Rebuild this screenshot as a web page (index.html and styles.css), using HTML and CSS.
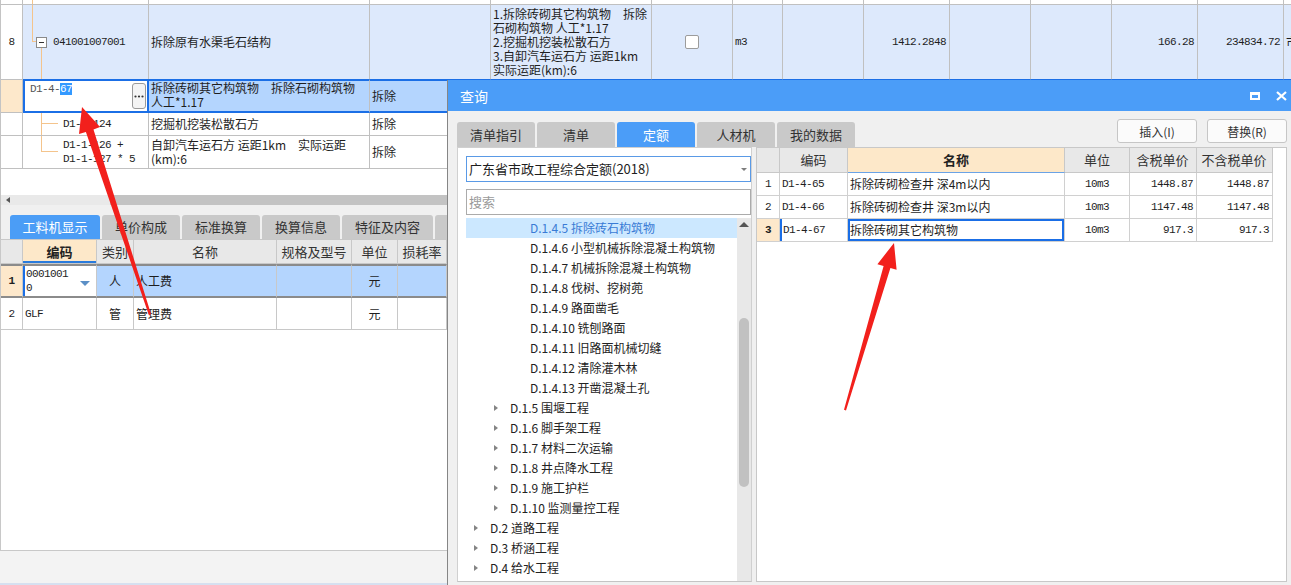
FILE: index.html
```html
<!DOCTYPE html>
<html lang="zh">
<head>
<meta charset="utf-8">
<title>查询</title>
<link rel="stylesheet" href="styles.css">
</head>
<body>
<div class="upper">
  <div class="trow r0">
    <div class="tc w0"></div><div class="tc w1 ln0"></div><div class="tc w2"></div><div class="tc w3"></div><div class="tc w4"></div><div class="tc w5"></div><div class="tc w6"></div><div class="tc w7"></div><div class="tc w8"></div><div class="tc w9"></div><div class="tc w10"></div><div class="tc w11"></div><div class="tc w12"></div><div class="tc w13"></div>
  </div>
  <div class="trow r8">
    <div class="tc w0"><span class="m">8</span></div>
    <div class="tc w1 tree8"><span class="tbox"></span><span class="m">041001007001</span></div>
    <div class="tc w2">拆除原有水渠毛石结构</div>
    <div class="tc w3"></div>
    <div class="tc w4"><div class="lines">1.拆除砖砌其它构筑物　拆除<br>石砌构筑物 人工*1.17<br>2.挖掘机挖装松散石方<br>3.自卸汽车运石方 运距1km<br>实际运距(km):6</div></div>
    <div class="tc w5"><span class="chk"></span></div>
    <div class="tc w6"><span class="m">m3</span></div>
    <div class="tc w7"></div>
    <div class="tc w8 num"><span class="m">1412.2848</span></div>
    <div class="tc w9"></div>
    <div class="tc w10"></div>
    <div class="tc w11 num"><span class="m">166.28</span></div>
    <div class="tc w12 num"><span class="m">234834.72</span></div>
    <div class="tc w13">市政</div>
  </div>
  <div class="trow rsel">
    <div class="tc w0"></div>
    <div class="tc w1 editor"><span class="etext m">D1-4-<span class="hl">67</span></span><span class="ebtn"><svg width="10" height="3" viewBox="0 0 10 3"><circle cx="1.5" cy="1.5" r="1.1" fill="#333"/><circle cx="5" cy="1.5" r="1.1" fill="#333"/><circle cx="8.5" cy="1.5" r="1.1" fill="#333"/></svg></span></div>
    <div class="tc w2 topal"><div class="lines">拆除砖砌其它构筑物　拆除石砌构筑物<br>人工*1.17</div></div>
    <div class="tc w3">拆除</div>
    <div class="tc w4"></div><div class="tc w5"></div><div class="tc w6"></div><div class="tc w7"></div><div class="tc w8"></div><div class="tc w9"></div><div class="tc w10"></div><div class="tc w11"></div><div class="tc w12"></div><div class="tc w13"></div>
  </div>
  <div class="trow rs1">
    <div class="tc w0"></div>
    <div class="tc w1 tree1"><span class="m">D1-1-124</span></div>
    <div class="tc w2">挖掘机挖装松散石方</div>
    <div class="tc w3">拆除</div>
    <div class="tc w4"></div><div class="tc w5"></div><div class="tc w6"></div><div class="tc w7"></div><div class="tc w8"></div><div class="tc w9"></div><div class="tc w10"></div><div class="tc w11"></div><div class="tc w12"></div><div class="tc w13"></div>
  </div>
  <div class="trow rs2">
    <div class="tc w0"></div>
    <div class="tc w1 tree2"><div class="lines m">D1-1-126 +<br>D1-1-127 * 5</div></div>
    <div class="tc w2"><div class="lines">自卸汽车运石方 运距1km　实际运距<br>(km):6</div></div>
    <div class="tc w3">拆除</div>
    <div class="tc w4"></div><div class="tc w5"></div><div class="tc w6"></div><div class="tc w7"></div><div class="tc w8"></div><div class="tc w9"></div><div class="tc w10"></div><div class="tc w11"></div><div class="tc w12"></div><div class="tc w13"></div>
  </div>
</div>
<div class="hscroll"><div class="hs-l"><span class="hs-arrow"></span></div><div class="hs-thumb"></div></div>
<div class="lgap"></div>
<div class="btabs">
  <span class="btab on">工料机显示</span><span class="btab">单价构成</span><span class="btab">标准换算</span><span class="btab">换算信息</span><span class="btab wide">特征及内容</span><span class="btab part"></span>
</div>
<div class="btable">
  <div class="brow bh">
    <div class="bc b0"></div><div class="bc b1 hsel">编码</div><div class="bc b2">类别</div><div class="bc b3">名称</div><div class="bc b4">规格及型号</div><div class="bc b5">单位</div><div class="bc b6">损耗率</div>
  </div>
  <div class="brow bsel">
    <div class="bc b0 rn"><span class="m">1</span></div>
    <div class="bc b1 bed"><div class="lines m">0001001<br>0</div><span class="dd"></span></div>
    <div class="bc b2 cen">人</div>
    <div class="bc b3">人工费</div>
    <div class="bc b4"></div>
    <div class="bc b5 cen">元</div>
    <div class="bc b6"></div>
  </div>
  <div class="brow br2">
    <div class="bc b0 cen"><span class="m">2</span></div>
    <div class="bc b1"><span class="m">GLF</span></div>
    <div class="bc b2 cen">管</div>
    <div class="bc b3">管理费</div>
    <div class="bc b4"></div>
    <div class="bc b5 cen">元</div>
    <div class="bc b6"></div>
  </div>
</div>
<div class="status"></div>
<div class="bline"></div>

<div class="dialog">
  <div class="dtitle">
    <span class="dt-text">查询</span>
    <span class="dt-icons">
      <svg width="10" height="8" viewBox="0 0 10 8"><rect x="0" y="0" width="10" height="3" fill="#fff"/><rect x="1" y="1" width="8" height="6" fill="none" stroke="#fff" stroke-width="2"/></svg>
      <svg width="11" height="10" viewBox="0 0 11 10"><path d="M1 1L10 9M10 1L1 9" stroke="#fff" stroke-width="2.2" fill="none"/></svg>
    </span>
  </div>
  <div class="dbody">
    <div class="dtop">
      <div class="dtabs"><span class="dtab">清单指引</span><span class="dtab">清单</span><span class="dtab on">定额</span><span class="dtab">人材机</span><span class="dtab">我的数据</span></div>
      <div class="dbtns"><button class="dbtn">插入(I)</button><button class="dbtn">替换(R)</button></div>
    </div>
    <div class="dpanes">
      <div class="lpane">
        <div class="combo"><span>广东省市政工程综合定额(2018)</span><span class="caret"></span></div>
        <div class="search">搜索</div>
        <div class="tree">
          <div class="tlist">
            <div class="ti l3 act"><span class="tarr none"></span>D.1.4.5 拆除砖石构筑物</div>
            <div class="ti l3"><span class="tarr none"></span>D.1.4.6 小型机械拆除混凝土构筑物</div>
            <div class="ti l3"><span class="tarr none"></span>D.1.4.7 机械拆除混凝土构筑物</div>
            <div class="ti l3"><span class="tarr none"></span>D.1.4.8 伐树、挖树蔸</div>
            <div class="ti l3"><span class="tarr none"></span>D.1.4.9 路面凿毛</div>
            <div class="ti l3"><span class="tarr none"></span>D.1.4.10 铣刨路面</div>
            <div class="ti l3"><span class="tarr none"></span>D.1.4.11 旧路面机械切缝</div>
            <div class="ti l3"><span class="tarr none"></span>D.1.4.12 清除灌木林</div>
            <div class="ti l3"><span class="tarr none"></span>D.1.4.13 开凿混凝土孔</div>
            <div class="ti l2"><span class="tarr"></span>D.1.5 围堰工程</div>
            <div class="ti l2"><span class="tarr"></span>D.1.6 脚手架工程</div>
            <div class="ti l2"><span class="tarr"></span>D.1.7 材料二次运输</div>
            <div class="ti l2"><span class="tarr"></span>D.1.8 井点降水工程</div>
            <div class="ti l2"><span class="tarr"></span>D.1.9 施工护栏</div>
            <div class="ti l2"><span class="tarr"></span>D.1.10 监测量控工程</div>
            <div class="ti l1"><span class="tarr"></span>D.2 道路工程</div>
            <div class="ti l1"><span class="tarr"></span>D.3 桥涵工程</div>
            <div class="ti l1"><span class="tarr"></span>D.4 给水工程</div>
          </div>
          <div class="vscroll"><span class="vs-up"></span><span class="vs-thumb"></span></div>
        </div>
      </div>
      <div class="rpane">
        <div class="rrow rhead">
          <div class="rc c0"></div><div class="rc c1">编码</div><div class="rc c2 hname">名称</div><div class="rc c3">单位</div><div class="rc c4">含税单价</div><div class="rc c5">不含税单价</div>
        </div>
        <div class="rrow">
          <div class="rc c0"><span class="m">1</span></div><div class="rc c1"><span class="m">D1-4-65</span></div><div class="rc c2">拆除砖砌检查井 深4m以内</div><div class="rc c3"><span class="m">10m3</span></div><div class="rc c4"><span class="m">1448.87</span></div><div class="rc c5"><span class="m">1448.87</span></div>
        </div>
        <div class="rrow">
          <div class="rc c0"><span class="m">2</span></div><div class="rc c1"><span class="m">D1-4-66</span></div><div class="rc c2">拆除砖砌检查井 深3m以内</div><div class="rc c3"><span class="m">10m3</span></div><div class="rc c4"><span class="m">1147.48</span></div><div class="rc c5"><span class="m">1147.48</span></div>
        </div>
        <div class="rrow rcur">
          <div class="rc c0"><span class="m">3</span></div><div class="rc c1"><span class="m">D1-4-67</span></div><div class="rc c2">拆除砖砌其它构筑物</div><div class="rc c3"><span class="m">10m3</span></div><div class="rc c4"><span class="m">917.3</span></div><div class="rc c5"><span class="m">917.3</span></div>
        </div>
      </div>
    </div>
  </div>
</div>

<svg class="annot" width="1291" height="585" viewBox="0 0 1291 585">
  <polygon points="82,107 100,127 93.5,129.6 151,314 149,315.5 85.9,132 79,134" fill="#f2201c"/>
  <polygon points="894,243 896.6,269.8 890.4,268 846,410.5 844,409.7 883.6,266 877.4,264.2" fill="#f2201c"/>
</svg>
</body>
</html>
```
FILE: styles.css
```css
* { box-sizing: border-box; margin: 0; padding: 0; }
html, body { width: 1291px; height: 585px; }
body {
  overflow: hidden;
  position: relative;
  font-family: "Noto Sans CJK SC", "Liberation Sans", sans-serif;
  font-size: 12px;
  line-height: 14px;
  color: #1e1e1e;
  background: #f3f3f3;
}
.m {
  font-family: "Liberation Mono", "Noto Sans CJK SC", monospace;
  font-size: 11px;
  letter-spacing: -0.6px;
}

/* ---------- upper grid ---------- */
.upper { height: 195px; background: #fff; border-left: 1px solid #c4c4c4; overflow: hidden; }
.trow { display: flex; width: 1400px; }
.tc {
  flex: none;
  display: flex;
  align-items: center;
  border-right: 1px solid #c0c0c0;
  border-bottom: 1px solid #c0c0c0;
  white-space: nowrap;
  overflow: hidden;
  padding: 0 2px;
}
.w0 { width: 22px; justify-content: center; padding: 0; }
.w1 { width: 126px; }
.w2 { width: 221px; }
.w3 { width: 121px; }
.w4 { width: 161px; }
.w5 { width: 81px; justify-content: center; }
.w6 { width: 50px; }
.w7 { width: 81px; }
.w8 { width: 86px; }
.w9 { width: 81px; }
.w10 { width: 81px; }
.w11 { width: 86px; }
.w12 { width: 86px; }
.w13 { width: 117px; }
.num { justify-content: flex-end; padding-right: 3px; }
.lines { white-space: nowrap; }

.r0 { height: 5px; }
.ln0 { background: linear-gradient(#f4c48c, #f4c48c) 9px 0 / 1px 100% no-repeat; }
.r8 { height: 75px; background: #dde9fc; }
.r8 .w0 { background: #fff; }
.tree8 {
  padding-left: 13px;
  background:
    linear-gradient(#f4c48c, #f4c48c) 9px 0 / 1px 37px no-repeat,
    linear-gradient(#f4c48c, #f4c48c) 9px 36px / 4px 1px no-repeat,
    linear-gradient(#f4c48c, #f4c48c) 18px 42px / 1px 40px no-repeat;
}
.tbox {
  width: 11px; height: 11px;
  border: 1px solid #8a8a8a;
  background: #fff;
  margin-right: 6px;
  display: flex; align-items: center; justify-content: center;
}
.tbox::after { content: ""; width: 5px; height: 1px; background: #333; }
.chk { width: 14px; height: 14px; border: 1px solid #9c9c9c; border-radius: 2px; background: #fff; }

.rsel { height: 34px; margin-top: -1px; }
.rsel .tc { background: #b4d5fe; border-top: 2px solid #1b6fe6; border-bottom: 2px solid #1b6fe6; }
.rsel .w0 { background: #fde8cb; border-top: 1px solid #c0c0c0; border-bottom: 1px solid #c0c0c0; }
.rsel .editor {
  background: #fff;
  border-right: 2px solid #1b6fe6;
  box-shadow: inset 2px 0 0 #1b6fe6;
  align-items: flex-start;
  padding: 0 1px 0 7px;
}
.etext { color: #555; margin-top: 1px; }
.hl { background: #3399ff; color: #fff; }
.ebtn {
  margin-left: auto;
  align-self: center;
  width: 14px; height: 26px;
  border: 1px solid #9a9a9a;
  border-radius: 3px;
  background: #f4f4f4;
  display: flex; align-items: center; justify-content: center;
}
.ebtn svg { display: block; }
.topal { align-items: flex-start; }

.rs1 { height: 23px; }
.rs2 { height: 33px; }
.tree1 {
  padding-left: 40px;
  background:
    linear-gradient(#f4c48c, #f4c48c) 18px 0 / 1px 100% no-repeat,
    linear-gradient(#f4c48c, #f4c48c) 18px 10px / 17px 1px no-repeat;
}
.tree2 {
  padding-left: 40px;
  background:
    linear-gradient(#f4c48c, #f4c48c) 18px 0 / 1px 16px no-repeat,
    linear-gradient(#f4c48c, #f4c48c) 18px 15px / 17px 1px no-repeat;
}

/* ---------- lower pane ---------- */
.hscroll { height: 10px; display: flex; background: #e9e9e9; border-left: 1px solid #c4c4c4; }
.hs-l { width: 109px; display: flex; align-items: center; padding-left: 5px; }
.hs-arrow { width: 0; height: 0; border-right: 4px solid #555; border-top: 3px solid transparent; border-bottom: 3px solid transparent; }
.hs-thumb { width: 338px; background: #c3c3c3; }
.lgap { height: 10px; background: #f0f0f0; border-left: 1px solid #c4c4c4; }
.btabs { height: 24px; display: flex; gap: 2px; padding-left: 9px; background: #f0f0f0; border-left: 1px solid #c4c4c4; }
.btab {
  width: 78px;
  background: #c9c9c9;
  border-radius: 3px 3px 0 0;
  display: flex; align-items: center; justify-content: center;
  font-size: 13px;
  color: #333;
}
.btab.on { width: 90px; background: #4b9df6; color: #fff; }
.btab.wide { width: 91px; }
.btab.part { width: 20px; }

.btable { height: 312px; background: #fff; border-top: 1px solid #c8c8c8; border-left: 1px solid #c8c8c8; border-bottom: 1px solid #c8c8c8; }
.brow { display: flex; }
.bc {
  flex: none;
  display: flex; align-items: center;
  border-right: 1px solid #c8c8c8;
  border-bottom: 1px solid #c8c8c8;
  padding: 0 2px;
  white-space: nowrap; overflow: hidden;
}
.b0 { width: 22px; justify-content: center; padding: 0; }
.b1 { width: 74px; }
.b2 { width: 37px; }
.b3 { width: 143px; }
.b4 { width: 75px; }
.b5 { width: 46px; }
.b6 { width: 49px; }
.cen { justify-content: center; }
.bh { height: 24px; }
.bh .bc { background: #e8e8e8; justify-content: center; font-size: 13px; color: #333; }
.bh .hsel { background: #fde8c9; font-weight: bold; box-shadow: inset 0 -2px 0 #2a7bdc; color: #222; }
.bsel { height: 34px; }
.bsel .bc { background: #b4d5fe; border-top: 2px solid #8b8b8b; border-bottom: 2px solid #8b8b8b; }
.bsel .rn { background: #fde8cb; font-weight: bold; }
.bsel .bed { background: #fff; box-shadow: inset 2px 0 0 #1b6fe6; padding-left: 3px; justify-content: space-between; padding-right: 6px; }
.dd { width: 0; height: 0; border-top: 5px solid #5b8fc6; border-left: 5px solid transparent; border-right: 5px solid transparent; margin-top: 4px; }
.br2 { height: 32px; }
.status { height: 32px; background: #f3f3f3; }
.bline { height: 2px; background: #d6e0f0; }

/* ---------- dialog ---------- */
.dialog {
  position: absolute;
  left: 447px; top: 80px;
  width: 844px; height: 505px;
  background: #f0f0f0;
  border-left: 1px solid #868686;
  display: flex; flex-direction: column;
}
.dtitle {
  height: 31px;
  flex: none;
  background: #4b9df8;
  display: flex; align-items: center; justify-content: space-between;
  padding: 0 4px 0 12px;
  color: #fff;
  font-size: 14px;
}
.dt-icons { display: flex; align-items: center; gap: 16px; }
.dt-icons svg { display: block; }
.dbody { flex: 1; display: flex; flex-direction: column; padding: 0 4px 3px 9px; }
.dtop { height: 36px; flex: none; display: flex; justify-content: space-between; }
.dtabs { display: flex; gap: 2px; align-self: flex-end; }
.dtab {
  width: 78px; height: 25px;
  background: #c9c9c9;
  border-radius: 3px 3px 0 0;
  display: flex; align-items: center; justify-content: center;
  font-size: 13px; color: #333;
}
.dtab.on { background: #4b9df8; color: #fff; }
.dbtns { display: flex; gap: 10px; margin-top: 8px; }
.dbtn {
  width: 80px; height: 24px;
  background: #fbfbfb;
  border: 1px solid #c6c6c6;
  border-radius: 3px;
  font-family: "Noto Sans CJK SC", "Liberation Sans", sans-serif;
  font-size: 12px;
  color: #333;
}
.dpanes { flex: 1; display: flex; gap: 4px; }
.lpane {
  width: 295px;
  background: #fff;
  border: 1px solid #d0d0d0;
  border-bottom-color: #c4c4c4;
  display: flex; flex-direction: column;
  padding: 8px 0 0 8px;
}
.combo {
  height: 26px; flex: none;
  border: 1px solid #5a9ae6;
  display: flex; align-items: center; justify-content: space-between;
  padding: 0 3px 0 2px;
  font-size: 13px;
}
.caret { width: 0; height: 0; border-top: 3px solid #7d7d7d; border-left: 3px solid transparent; border-right: 3px solid transparent; }
.search {
  height: 26px; flex: none; margin-top: 7px;
  border: 1px solid #ababab;
  display: flex; align-items: center;
  padding-left: 2px;
  color: #9a9a9a;
  font-size: 13px;
}
.tree { flex: 1; display: flex; margin-top: 3px; overflow: hidden; }
.tlist { flex: 1; overflow: hidden; }
.ti { height: 20px; display: flex; align-items: center; white-space: nowrap; font-size: 12px; color: #222; }
.ti.l1 { padding-left: 8px; }
.ti.l2 { padding-left: 28px; }
.ti.l3 { padding-left: 48px; }
.ti.act { background: #cce8ff; color: #3a7bd5; }
.tarr { width: 16px; flex: none; display: flex; align-items: center; }
.tarr::before { content: ""; width: 0; height: 0; border-left: 4px solid #858585; border-top: 3.5px solid transparent; border-bottom: 3.5px solid transparent; }
.tarr.none::before { display: none; }
.vscroll { width: 14px; background: #e8e8e8; display: flex; flex-direction: column; align-items: center; }
.vs-up { width: 0; height: 0; margin-top: 4px; border-bottom: 5px solid #555; border-left: 5px solid transparent; border-right: 5px solid transparent; }
.vs-thumb { width: 10px; height: 169px; margin-top: 91px; background: #c1c1c1; border-radius: 5px; }

.rpane { flex: 1; background: #fff; border: 1px solid #c8c8c8; }
.rrow { display: flex; height: 23px; }
.rhead { height: 25px; }
.rc {
  flex: none;
  display: flex; align-items: center;
  border-right: 1px solid #d0d0d0;
  border-bottom: 1px solid #d0d0d0;
  padding: 0 2px;
  white-space: nowrap; overflow: hidden;
}
.c0 { width: 23px; justify-content: center; padding: 0; }
.c1 { width: 68px; }
.c2 { width: 217px; }
.c3 { width: 65px; justify-content: center; }
.c4 { width: 67px; justify-content: flex-end; padding-right: 3px; }
.c5 { width: 76px; justify-content: flex-end; padding-right: 3px; }
.rhead .rc { background: #e8e8e8; justify-content: center; font-size: 13px; color: #333; border-color: #c8c8c8; }
.rhead .hname { background: #fde8c9; font-weight: bold; color: #222; border-bottom-color: #6aa3e6; }
.rcur .c0 { background: #fde8cb; font-weight: bold; }
.rcur .c1 { box-shadow: inset 2px 0 0 #1a6ee6; padding-left: 3px; }
.rcur .c2 { box-shadow: inset 0 0 0 2px #1a6ee6; }

.annot { position: absolute; left: 0; top: 0; pointer-events: none; }
```
